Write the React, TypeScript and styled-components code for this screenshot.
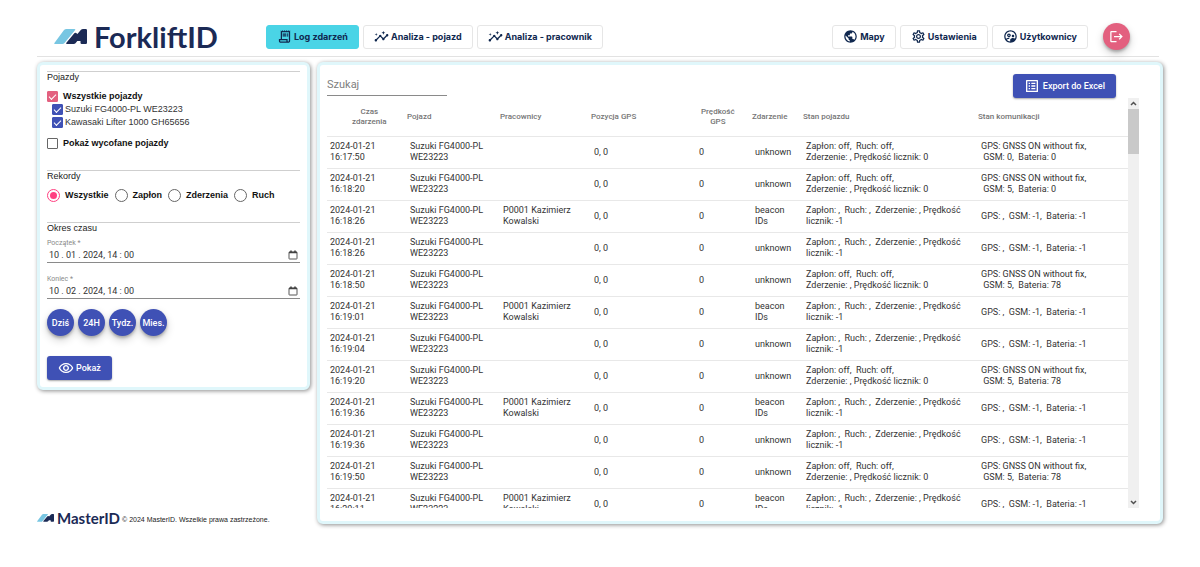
import React, { useRef, useState } from "react";
import styled, { createGlobalStyle, css } from "styled-components";
import {
  MdOutlineReceiptLong,
  MdInsights,
  MdPublic,
  MdOutlineSettings,
  MdOutlineSupervisedUserCircle,
  MdLogout,
  MdOutlineRemoveRedEye,
  MdOutlineListAlt,
} from "react-icons/md";

const navy = "#1b2a55";
const indigo = "#3f51b5";
const pink = "#e3607f";
const arial = `"Liberation Sans", Arial, sans-serif`;
const roboto = `Roboto, "Liberation Sans", sans-serif`;

const GlobalStyle = createGlobalStyle`
  *, *::before, *::after { box-sizing: border-box; }
  body { margin: 0; background: #fff; color: #222; font: 9px/11px ${arial}; }
  button, input { font: inherit; color: inherit; margin: 0; }
`;

const Page = styled.div`
  display: flex;
  flex-direction: column;
  gap: 5px;
  min-height: 100vh;
  padding: 0 37px;
`;

const Header = styled.header`
  display: flex;
  align-items: center;
  height: 57px;
  margin-right: 4px;
  padding: 17px 29px 0 17px;
  border-bottom: 1px solid #e2e2e2;
`;

const Brand = styled.a<{ $small?: boolean }>`
  display: flex;
  align-items: center;
  gap: ${(p) => (p.$small ? 3 : 7)}px;
  width: ${(p) => (p.$small ? "auto" : "212px")};
  color: ${navy};
  font: 700 ${(p) => (p.$small ? "15px/12px" : "29px/38px")} Lato, sans-serif;
  text-decoration: none;
  white-space: nowrap;
`;

const Nav = styled.nav<{ $end?: boolean }>`
  display: flex;
  gap: 4px;
  margin-left: ${(p) => (p.$end ? "auto" : 0)};
`;

const NavButton = styled.button<{ $active?: boolean }>`
  display: flex;
  align-items: center;
  gap: 2px;
  height: 24px;
  padding: 0 10px;
  border: 1px solid ${(p) => (p.$active ? "#4ad4e6" : "#e6e6e6")};
  border-radius: 3px;
  background: ${(p) => (p.$active ? "#4ad4e6" : "#fff")};
  color: #10284f;
  font: 700 9px/14px Inter, sans-serif;
  white-space: nowrap;
  svg { width: 15px; height: 15px; }
`;

const RoundButton = styled.button<{ $tone: string }>`
  display: flex;
  flex: none;
  align-items: center;
  justify-content: center;
  width: 27px;
  height: 27px;
  padding: 0;
  border: 0;
  border-radius: 50%;
  background: ${(p) => p.$tone};
  color: #fff;
  font: 500 9px/12px ${roboto};
  white-space: nowrap;
  box-shadow: 0 2px 3px rgba(0, 0, 0, 0.25), 0 4px 8px rgba(0, 0, 0, 0.18);
`;

const LogoutButton = styled(RoundButton)`
  margin-left: 15px;
`;

const SolidButton = styled.button`
  display: flex;
  align-items: center;
  gap: 3px;
  height: 24px;
  padding: 0 11px;
  border: 0;
  border-radius: 3px;
  background: ${indigo};
  color: #fff;
  font: 500 9px/12px ${roboto};
  white-space: nowrap;
  box-shadow: 0 1px 2px rgba(0, 0, 0, 0.35);
  svg { width: 16px; height: 16px; }
`;

const Main = styled.main`
  display: grid;
  grid-template-columns: 273px minmax(0, 1fr);
  gap: 7px;
`;

const Side = styled.div`
  display: flex;
  flex-direction: column;
  justify-content: space-between;
`;

const panel = css`
  border: 3px solid #e0f7fb;
  border-radius: 6px;
  background: #fff;
  box-shadow: 1px 1px 4px rgba(0, 0, 0, 0.45);
`;

const Filters = styled.form`
  ${panel}
  padding: 6px 7px 7px;
`;

const Group = styled.fieldset<{ $space: number }>`
  min-width: 0;
  margin: 0 0 ${(p) => p.$space}px;
  padding: 0;
  border: 0;
  border-top: 1px solid #cfcfcf;
`;

const GroupTitle = styled.legend`
  float: left;
  width: 100%;
  padding: 0;
  line-height: 11px;
`;

const Options = styled.div`
  clear: both;
`;

const Check = styled.label<{ $strong?: boolean; $child?: boolean }>`
  display: flex;
  align-items: center;
  gap: ${(p) => (p.$child ? 2 : 5)}px;
  height: 13px;
  padding-left: ${(p) => (p.$child ? 5 : 0)}px;
  font-weight: ${(p) => (p.$strong ? 700 : 400)};
  color: ${(p) => (p.$strong ? "#111" : "#333")};
`;

const CheckList = styled(Options)`
  padding-top: 7px;
`;

const Retired = styled.div`
  padding-top: 8px;
`;

const Tick = styled.input<{ $tone: string }>`
  appearance: none;
  display: grid;
  place-items: center;
  flex: none;
  width: 11px;
  height: 11px;
  border: 1px solid #666;
  border-radius: 1px;
  &:checked { border-color: ${(p) => p.$tone}; background: ${(p) => p.$tone}; }
  &:checked::after {
    content: "";
    width: 7px;
    height: 4px;
    margin-bottom: 2px;
    border: solid #fff;
    border-width: 0 0 1px 1px;
    transform: rotate(-45deg);
  }
`;

const Radios = styled(Options)`
  display: flex;
  gap: 6px;
  padding-top: 7px;
`;

const RadioLabel = styled.label`
  display: flex;
  align-items: center;
  gap: 5px;
  height: 13px;
  color: #111;
  font-weight: 700;
`;

const Radio = styled.input`
  appearance: none;
  display: grid;
  place-items: center;
  flex: none;
  width: 13px;
  height: 13px;
  border: 1px solid #666;
  border-radius: 50%;
  &:checked { border-color: #ff4081; }
  &:checked::after {
    content: "";
    width: 7px;
    height: 7px;
    border-radius: 50%;
    background: #ff4081;
  }
`;

const Dates = styled(Options)`
  padding-top: 3px;
`;

const Field = styled.div`
  display: grid;
  grid-template-columns: 1fr auto;
  align-items: center;
  margin-bottom: 10px;
  border-bottom: 1px solid #8a8a8a;
  color: #333;
`;

const FieldLabel = styled.label`
  grid-column: 1 / -1;
  padding-top: 2px;
  color: #8a8a8a;
  font: 7px/8px ${roboto};
`;

const DateInput = styled.input`
  min-width: 0;
  height: 15px;
  padding: 0 2px;
  border: 0;
  outline: 0;
  background: none;
  font: 9px/14px ${roboto};
`;

const PickerButton = styled.button`
  display: flex;
  padding: 0 2px;
  border: 0;
  background: none;
`;

const Shortcuts = styled.div`
  display: flex;
  gap: 4px;
  margin-bottom: 20px;
`;

const ShowButton = styled(SolidButton)`
  gap: 2px;
`;

const Footer = styled.footer`
  display: flex;
  align-items: flex-end;
  gap: 2px;
  font-size: 7px;
  line-height: 8px;
  white-space: nowrap;
`;

const Log = styled.section`
  ${panel}
  display: flex;
  flex-direction: column;
  height: calc(100vh - 105px);
  min-height: 320px;
  padding: 9px 21px 13px 7px;
  font-family: ${roboto};
`;

const Toolbar = styled.div`
  display: flex;
  align-items: flex-start;
  justify-content: space-between;
  padding-right: 23px;
`;

const Search = styled.input`
  width: 120px;
  height: 22px;
  padding: 0;
  border: 0;
  border-bottom: 1px solid #8a8a8a;
  outline: 0;
  background: none;
  font: 11px/14px ${roboto};
  &::placeholder { color: #808080; opacity: 1; }
`;

const Scroller = styled.div`
  display: flex;
  flex: 1;
  min-height: 0;
`;

const Viewport = styled.div`
  flex: 1;
  min-width: 0;
  overflow: auto;
  scrollbar-width: none;
`;

const Track = styled.div`
  display: flex;
  flex-direction: column;
  width: 11px;
  background: #f0f0f0;
`;

const Arrow = styled.button`
  display: flex;
  align-items: center;
  justify-content: center;
  height: 11px;
  padding: 0;
  border: 0;
  background: none;
  color: #505050;
`;

const Rail = styled.div`
  flex: 1;
`;

const Thumb = styled.div`
  height: 45px;
  background: #c9c9c9;
`;

const Table = styled.table`
  width: 100%;
  border-collapse: collapse;
  table-layout: fixed;
  color: #333;
`;

const Col = styled.col<{ $share: number }>`
  width: calc(100% * ${(p) => p.$share} / 801);
`;

const Th = styled.th`
  height: 38px;
  padding: 0;
  border-bottom: 1px solid #e8e8e8;
  color: #757575;
  font: 500 8px/10px ${roboto};
  text-align: left;
`;

const ThText = styled.span<{ $indent: number }>`
  display: inline-block;
  margin-left: ${(p) => p.$indent}px;
  text-align: center;
  white-space: pre-line;
`;

const Td = styled.td`
  height: 32px;
  padding: 0 0 0 3px;
  border-bottom: 1px solid #e8e8e8;
  font: 9px/11px ${roboto};
  white-space: pre-wrap;
`;

const columns = [
  { title: "Czas\nzdarzenia", share: 80, indent: 25 },
  { title: "Pojazd", share: 93, indent: 0 },
  { title: "Pracownicy", share: 91, indent: 0 },
  { title: "Pozycja GPS", share: 105, indent: 0 },
  { title: "Prędkość\nGPS", share: 56, indent: 5 },
  { title: "Zdarzenie", share: 51, indent: 0 },
  { title: "Stan pojazdu", share: 175, indent: 0 },
  { title: "Stan komunikacji", share: 150, indent: 0 },
];

const OFF = "Zapłon: off,  Ruch: off,\nZderzenie: , Prędkość licznik: 0";
const NONE = "Zapłon: ,  Ruch: ,  Zderzenie: , Prędkość\nlicznik: -1";
const NO_COMM = "GPS: ,  GSM: -1,  Bateria: -1";
const comm = (gsm: number, battery: number) =>
  `GPS: GNSS ON without fix,\n GSM: ${gsm},  Bateria: ${battery}`;

type Entry = { time: string; beacon?: boolean; comm?: string };

const entries: Entry[] = [
  { time: "16:17:50", comm: comm(0, 0) },
  { time: "16:18:20", comm: comm(5, 0) },
  { time: "16:18:26", beacon: true },
  { time: "16:18:26" },
  { time: "16:18:50", comm: comm(5, 78) },
  { time: "16:19:01", beacon: true },
  { time: "16:19:04" },
  { time: "16:19:20", comm: comm(5, 78) },
  { time: "16:19:36", beacon: true },
  { time: "16:19:36" },
  { time: "16:19:50", comm: comm(5, 78) },
  { time: "16:20:11", beacon: true },
];

const LogoMark = ({ width }: { width: number }) => (
  <svg width={width} height={(width * 15) / 33} viewBox="0 0 33 15" aria-hidden="true">
    <path d="M10 1Q11 0 12.500 0H20.500Q22 0 21 1.200L10.500 14Q9.700 15 8.500 15H1Q-.5 15 .6 13.700z" fill="#78c6e2" />
    <path d="M27 .8Q27.800 0 29 0H31.800Q33 0 33 1.200V13.800Q33 15 31.800 15H27.700Q26.500 15 26.500 13.800V12H23.300L21.500 14.200Q20.800 15 19.700 15H13Q11.500 15 12.400 13.800L20.300 4.200Q21.200 3.200 22.200 4L23.400 5z" fill={navy} />
  </svg>
);

const CalendarIcon = () => (
  <svg width="10" height="10" viewBox="0 0 10 10" fill="none" stroke="#444" aria-hidden="true">
    <path d="M1 2.500h8M3 .5v2M7 .5v2" strokeWidth="1.600" />
    <rect x="1" y="2" width="8" height="7" rx=".5" strokeWidth=".9" />
  </svg>
);

const Chevron = ({ down }: { down?: boolean }) => (
  <svg width="7" height="5" viewBox="0 0 7 5" fill="none" stroke="currentColor" strokeWidth="1.500" aria-hidden="true">
    <path d={down ? "M1 1l2.500 2.500L6 1" : "M1 4l2.500-2.500L6 4"} />
  </svg>
);

const DateField = ({ id, label, value }: { id: string; label: string; value: string }) => (
  <Field>
    <FieldLabel htmlFor={id}>{label} *</FieldLabel>
    <DateInput id={id} type="text" defaultValue={value} required />
    <PickerButton type="button" aria-label={`${label} – kalendarz`}>
      <CalendarIcon />
    </PickerButton>
  </Field>
);

export default function App() {
  const viewport = useRef<HTMLDivElement>(null);
  const rail = useRef<HTMLDivElement>(null);
  const [offset, setOffset] = useState(0);

  const onScroll = () => {
    const v = viewport.current;
    const r = rail.current;
    if (!v || !r) return;
    const range = v.scrollHeight - v.clientHeight;
    setOffset(range > 0 ? (v.scrollTop / range) * (r.clientHeight - 45) : 0);
  };
  const step = (by: number) => viewport.current?.scrollBy({ top: by });

  return (
    <Page>
      <GlobalStyle />
      <Header>
        <Brand href="#">
          <LogoMark width={33} />
          ForkliftID
        </Brand>
        <Nav>
          <NavButton $active><MdOutlineReceiptLong />Log zdarzeń</NavButton>
          <NavButton><MdInsights />Analiza - pojazd</NavButton>
          <NavButton><MdInsights />Analiza - pracownik</NavButton>
        </Nav>
        <Nav $end>
          <NavButton><MdPublic />Mapy</NavButton>
          <NavButton><MdOutlineSettings />Ustawienia</NavButton>
          <NavButton><MdOutlineSupervisedUserCircle />Użytkownicy</NavButton>
        </Nav>
        <LogoutButton $tone={pink} aria-label="Wyloguj"><MdLogout size={15} /></LogoutButton>
      </Header>

      <Main>
        <Side>
          <Filters onSubmit={(e) => e.preventDefault()}>
            <Group $space={20}>
              <GroupTitle>Pojazdy</GroupTitle>
              <CheckList>
                <Check $strong><Tick type="checkbox" $tone={pink} defaultChecked />Wszystkie pojazdy</Check>
                <Check $child><Tick type="checkbox" $tone={indigo} defaultChecked />Suzuki FG4000-PL WE23223</Check>
                <Check $child><Tick type="checkbox" $tone={indigo} defaultChecked />Kawasaki Lifter 1000 GH65656</Check>
                <Retired>
                  <Check $strong><Tick type="checkbox" $tone={pink} />Pokaż wycofane pojazdy</Check>
                </Retired>
              </CheckList>
            </Group>
            <Group $space={20}>
              <GroupTitle>Rekordy</GroupTitle>
              <Radios>
                {["Wszystkie", "Zapłon", "Zderzenia", "Ruch"].map((name, i) => (
                  <RadioLabel key={name}>
                    <Radio type="radio" name="records" defaultChecked={i === 0} />
                    {name}
                  </RadioLabel>
                ))}
              </Radios>
            </Group>
            <Group $space={0}>
              <GroupTitle>Okres czasu</GroupTitle>
              <Dates>
                <DateField id="from" label="Początek" value="10 . 01 . 2024, 14 : 00" />
                <DateField id="to" label="Koniec" value="10 . 02 . 2024, 14 : 00" />
              </Dates>
            </Group>
            <Shortcuts>
              {["Dziś", "24H", "Tydz.", "Mies."].map((name) => (
                <RoundButton key={name} type="button" $tone={indigo}>{name}</RoundButton>
              ))}
            </Shortcuts>
            <ShowButton type="submit"><MdOutlineRemoveRedEye />Pokaż</ShowButton>
          </Filters>
          <Footer>
            <Brand href="#" $small>
              <LogoMark width={17} />
              MasterID
            </Brand>
            <span>© 2024 MasterID. Wszelkie prawa zastrzeżone.</span>
          </Footer>
        </Side>

        <Log>
          <Toolbar>
            <Search type="text" placeholder="Szukaj" aria-label="Szukaj" />
            <SolidButton type="button"><MdOutlineListAlt />Export do Excel</SolidButton>
          </Toolbar>
          <Scroller>
            <Viewport ref={viewport} onScroll={onScroll}>
              <Table>
                <colgroup>
                  {columns.map((c) => <Col key={c.title} $share={c.share} />)}
                </colgroup>
                <thead>
                  <tr>
                    {columns.map((c) => (
                      <Th key={c.title} scope="col"><ThText $indent={c.indent}>{c.title}</ThText></Th>
                    ))}
                  </tr>
                </thead>
                <tbody>
                  {entries.map((e, i) => (
                    <tr key={i}>
                      <Td>{`2024-01-21\n${e.time}`}</Td>
                      <Td>{"Suzuki FG4000-PL\nWE23223"}</Td>
                      <Td>{e.beacon ? "P0001 Kazimierz\nKowalski" : ""}</Td>
                      <Td>0, 0</Td>
                      <Td>0</Td>
                      <Td>{e.beacon ? "beacon\nIDs" : "unknown"}</Td>
                      <Td>{e.comm ? OFF : NONE}</Td>
                      <Td>{e.comm ?? NO_COMM}</Td>
                    </tr>
                  ))}
                </tbody>
              </Table>
            </Viewport>
            <Track>
              <Arrow type="button" aria-label="W górę" onClick={() => step(-32)}><Chevron /></Arrow>
              <Rail ref={rail}>
                <Thumb style={{ transform: `translateY(${offset}px)` }} />
              </Rail>
              <Arrow type="button" aria-label="W dół" onClick={() => step(32)}><Chevron down /></Arrow>
            </Track>
          </Scroller>
        </Log>
      </Main>
    </Page>
  );
}
